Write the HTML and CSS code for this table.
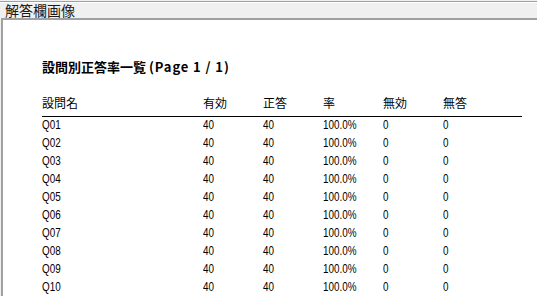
FILE: index.html
```html
<!DOCTYPE html>
<html lang="ja">
<head>
<meta charset="utf-8">
<link rel="stylesheet" href="styles.css">
</head>
<body>
<div class="group">
  <div class="legend">解答欄画像</div>
  <div class="panel">
    <div class="title">設問別正答率一覧 <span class="page">(Page 1 / 1)</span></div>
    <div class="table">
      <div class="row head"><span>設問名</span><span>有効</span><span>正答</span><span>率</span><span>無効</span><span>無答</span></div>
      <div class="row"><span>Q01</span><span>40</span><span>40</span><span>100.0%</span><span>0</span><span>0</span></div>
      <div class="row"><span>Q02</span><span>40</span><span>40</span><span>100.0%</span><span>0</span><span>0</span></div>
      <div class="row"><span>Q03</span><span>40</span><span>40</span><span>100.0%</span><span>0</span><span>0</span></div>
      <div class="row"><span>Q04</span><span>40</span><span>40</span><span>100.0%</span><span>0</span><span>0</span></div>
      <div class="row"><span>Q05</span><span>40</span><span>40</span><span>100.0%</span><span>0</span><span>0</span></div>
      <div class="row"><span>Q06</span><span>40</span><span>40</span><span>100.0%</span><span>0</span><span>0</span></div>
      <div class="row"><span>Q07</span><span>40</span><span>40</span><span>100.0%</span><span>0</span><span>0</span></div>
      <div class="row"><span>Q08</span><span>40</span><span>40</span><span>100.0%</span><span>0</span><span>0</span></div>
      <div class="row"><span>Q09</span><span>40</span><span>40</span><span>100.0%</span><span>0</span><span>0</span></div>
      <div class="row"><span>Q10</span><span>40</span><span>40</span><span>100.0%</span><span>0</span><span>0</span></div>
    </div>
  </div>
</div>
</body>
</html>
```
FILE: styles.css
```css
html, body {
  margin: 0;
  padding: 0;
  background: #f0f0f0;
  overflow: hidden;
  height: 296px;
}
.group {
  margin-top: 1px;
  border-top: 1px solid #a0a0a0;
  box-shadow: inset 0 1px 0 #ffffff;
  height: 295px;
  display: flex;
  flex-direction: column;
}
.legend {
  height: 17px;
  padding-left: 5px;
  font-family: "Noto Sans CJK JP", sans-serif;
  font-size: 14px;
  line-height: 16px;
  color: #1a1a1a;
}
.panel {
  flex: 1;
  margin-left: 1px;
  background: #ffffff;
  border-top: 2px solid #a0a0a0;
  border-left: 2px solid #a0a0a0;
  padding: 38px 15px 0 39px;
}
.title {
  font-family: "Noto Sans CJK JP", sans-serif;
  font-weight: bold;
  font-size: 13px;
  line-height: 17px;
  color: #000;
}
.page {
  letter-spacing: 0.9px;
}
.table {
  margin-top: 20px;
  width: 480px;
}
.row {
  display: grid;
  grid-template-columns: 161px 60px 60px 60px 60px 1fr;
  height: 18px;
  line-height: 15px;
  font-family: "Liberation Sans", sans-serif;
  font-size: 13px;
  color: #000;
}
.row span {
  display: inline-block;
  transform: scaleX(0.76);
  transform-origin: left center;
  white-space: nowrap;
}
.row.head {
  font-family: "Noto Sans CJK JP", sans-serif;
  font-size: 12px;
  height: 21px;
  line-height: 16px;
  border-bottom: 1px solid #000;
}
.row.head span {
  transform: none;
}
```
